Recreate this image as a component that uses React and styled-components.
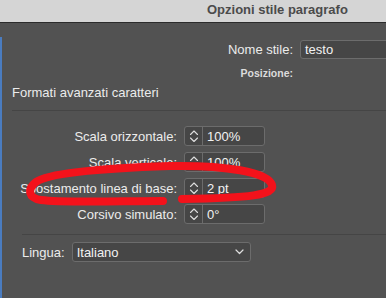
import { Fragment } from 'react';
import styled, { createGlobalStyle } from 'styled-components';

// ── Global ─────────────────────────────────────────────────
const Global = createGlobalStyle`
  html, body {
    margin: 0;
    padding: 0;
    background: #525252;
  }
  body {
    font-family: "Liberation Sans", Arial, sans-serif;
    overflow: hidden;
  }
`;

// ── Styled Components ──────────────────────────────────────
const Window = styled.div`
  position: relative;
  width: 386px;
  height: 298px;
  overflow: hidden;
  background: #525252;
  color: #ececec;
  font-size: 13px;
`;

const TitleBar = styled.div`
  height: 22px;
  line-height: 20px;
  padding-left: 207px;
  background: #d5d5d5;
  border-bottom: 1px solid #2b2b2b;
  color: #4b4b4b;
  font-weight: 700;
  font-size: 13px;
  white-space: nowrap;
`;

const Body = styled.div`
  display: flex;
  height: 275px;
`;

const SideEdge = styled.div`
  width: 2px;
  margin-top: 14px;
  background: #4a7cc0;
  flex-shrink: 0;
`;

const Content = styled.div`
  flex: 1;
  padding: 17px 0 0 10px;
  display: flex;
  flex-direction: column;
`;

const TopGrid = styled.div`
  display: grid;
  grid-template-columns: 281px 140px;
  column-gap: 7px;
  row-gap: 8px;
  align-items: center;
`;

const TopLabel = styled.span`
  text-align: right;
  font-size: ${(p) => (p.$small ? '10.5px' : '13px')};
  font-weight: ${(p) => (p.$small ? 700 : 400)};
  color: ${(p) => (p.$small ? '#dcdcdc' : '#ececec')};
  white-space: nowrap;
`;

const Field = styled.div`
  box-sizing: border-box;
  height: ${(p) => p.$h || 20}px;
  display: flex;
  align-items: center;
  background: #464646;
  border: 1px solid #6c6c6c;
  border-radius: 3px;
  color: #f2f2f2;
  white-space: nowrap;
`;

const FieldText = styled.span`
  padding-left: 4px;
  flex: 1;
`;

const SectionTitle = styled.div`
  margin-top: 6px;
  line-height: 16px;
  white-space: nowrap;
`;

const Divider = styled.div`
  height: 1px;
  background: #454545;
  margin: ${(p) => p.$m};
`;

const SpinGrid = styled.div`
  display: grid;
  grid-template-columns: 165px 81px;
  column-gap: 7px;
  row-gap: 6px;
  align-items: center;
`;

const SpinLabel = styled.span`
  text-align: right;
  white-space: nowrap;
`;

const Stepper = styled.div`
  width: 17px;
  height: 100%;
  border-right: 1px solid #6c6c6c;
  display: flex;
  align-items: center;
  justify-content: center;
`;

const LangRow = styled.div`
  display: flex;
  align-items: center;
  gap: 7px;
  padding-left: 10px;
`;

const Select = styled(Field)`
  width: 179px;
  padding-right: 6px;
`;

const Scribble = styled.svg`
  position: absolute;
  left: 0;
  top: 0;
  pointer-events: none;
`;

// ── Icons ──────────────────────────────────────────────────
const UpDown = () => (
  <svg width="10" height="18" viewBox="0 0 10 18" fill="none" stroke="#dedede" strokeWidth="1.1" strokeLinecap="round" strokeLinejoin="round">
    <path d="M1.5 7.5 L5 4 L8.5 7.5" />
    <path d="M1.5 11 L5 14.5 L8.5 11" />
  </svg>
);

const ChevronDown = () => (
  <svg width="9" height="6" viewBox="0 0 9 6" fill="none" stroke="#dedede" strokeWidth="1.2" strokeLinecap="round" strokeLinejoin="round">
    <path d="M1 1 L4.5 4.5 L8 1" />
  </svg>
);

// ── Data ───────────────────────────────────────────────────
const spins = [
  { label: 'Scala orizzontale:', value: '100%' },
  { label: 'Scala verticale:', value: '100%' },
  { label: 'Spostamento linea di base:', value: '2 pt' },
  { label: 'Corsivo simulato:', value: '0°' },
];

// ── Component ──────────────────────────────────────────────
function App() {
  return (
    <Window>
      <Global />
      <TitleBar>Opzioni stile paragrafo</TitleBar>
      <Body>
        <SideEdge />
        <Content>
          <TopGrid>
            <TopLabel>Nome stile:</TopLabel>
            <Field $h={19}>
              <FieldText>testo</FieldText>
            </Field>
            <TopLabel $small>Posizione:</TopLabel>
            <span />
          </TopGrid>

          <SectionTitle>Formati avanzati caratteri</SectionTitle>
          <Divider $m="9px 0 15px 0" />

          <SpinGrid>
            {spins.map((s) => (
              <Fragment key={s.label}>
                <SpinLabel>{s.label}</SpinLabel>
                <Field>
                  <Stepper>
                    <UpDown />
                  </Stepper>
                  <FieldText>{s.value}</FieldText>
                </Field>
              </Fragment>
            ))}
          </SpinGrid>

          <Divider $m="10px 0 7px 10px" />

          <LangRow>
            <span>Lingua:</span>
            <Select>
              <FieldText>Italiano</FieldText>
              <ChevronDown />
            </Select>
          </LangRow>
        </Content>
      </Body>

      <Scribble width="386" height="298" viewBox="0 0 386 298">
        <path
          d="M163 201 C120 201 62 203 41 200 C28 198 27 189 36 182 C50 172 110 168 170 166 C225 165 268 172 272 185 C275 195 250 198 182 199"
          fill="none"
          stroke="#f3121b"
          strokeWidth="8"
          strokeLinecap="round"
          strokeLinejoin="round"
        />
      </Scribble>
    </Window>
  );
}

export default App;
